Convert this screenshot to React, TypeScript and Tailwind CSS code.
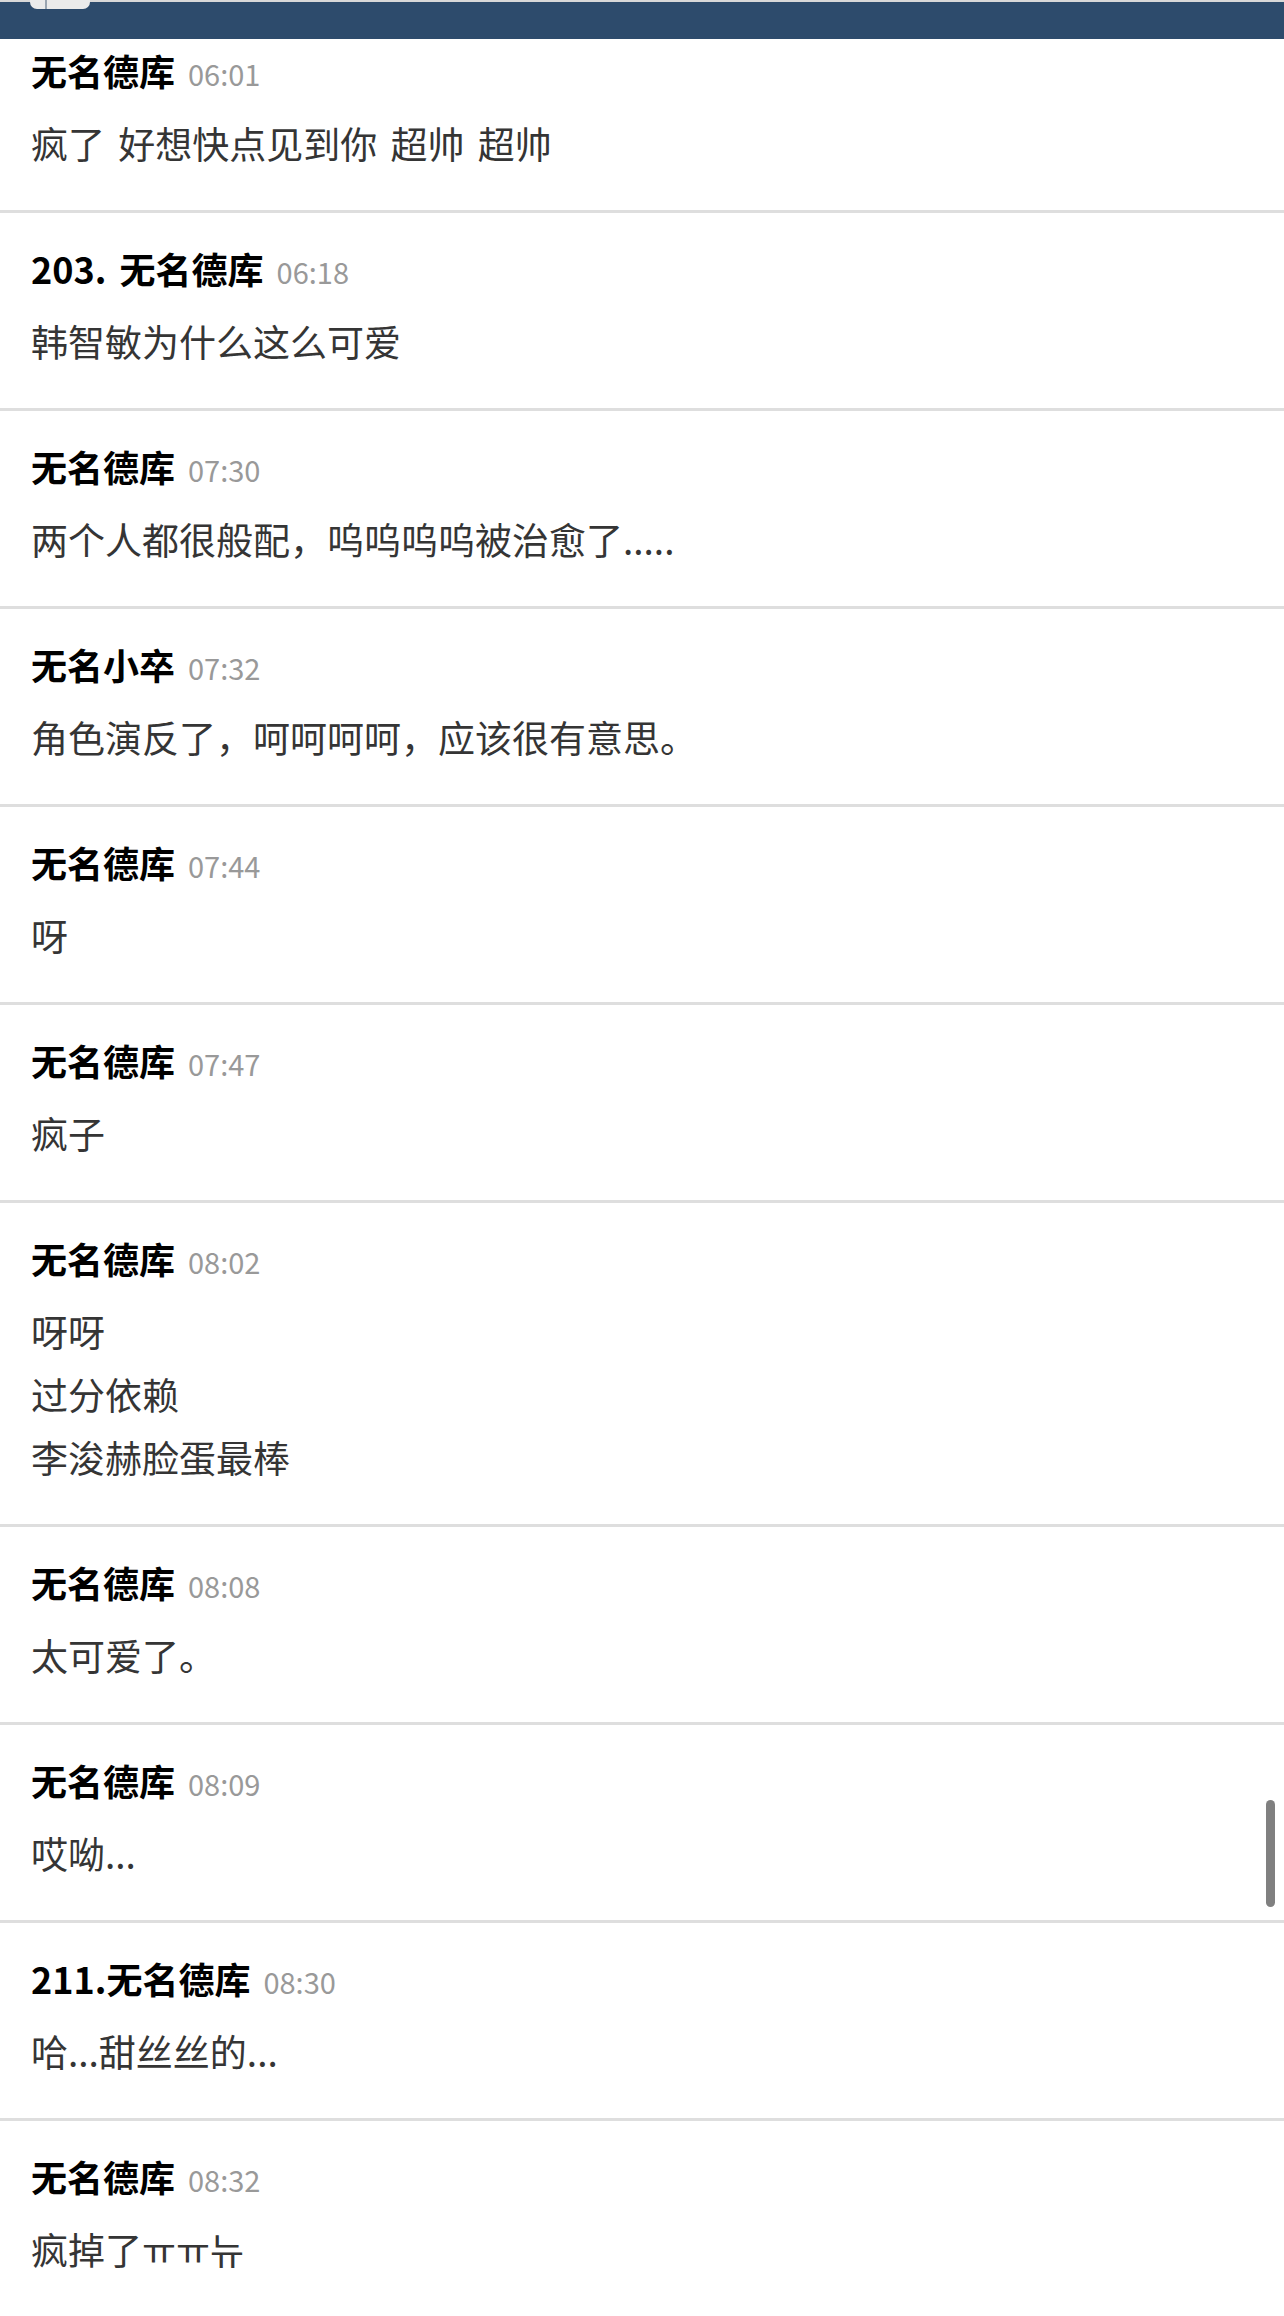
import React from "react";

type Comment = {
    name: string;
    time: string;
    lines: string[];
};

const comments: Comment[] = [
    { name: "无名德库", time: "06:01", lines: ["疯了 好想快点见到你 超帅 超帅"] },
    { name: "203. 无名德库", time: "06:18", lines: ["韩智敏为什么这么可爱"] },
    { name: "无名德库", time: "07:30", lines: ["两个人都很般配，呜呜呜呜被治愈了....."] },
    { name: "无名小卒", time: "07:32", lines: ["角色演反了，呵呵呵呵，应该很有意思。"] },
    { name: "无名德库", time: "07:44", lines: ["呀"] },
    { name: "无名德库", time: "07:47", lines: ["疯子"] },
    { name: "无名德库", time: "08:02", lines: ["呀呀", "过分依赖", "李浚赫脸蛋最棒"] },
    { name: "无名德库", time: "08:08", lines: ["太可爱了。"] },
    { name: "无名德库", time: "08:09", lines: ["哎呦..."] },
    { name: "211.无名德库", time: "08:30", lines: ["哈...甜丝丝的..."] },
    { name: "无名德库", time: "08:32", lines: ["疯掉了ㅠㅠ뉴"] },
];

function CommentRow({ c }: { c: Comment }) {
    return (
        <div className="border-b-[3px] border-[#dedede] pl-[31px] pr-8 pt-[31px] pb-[35px] [word-spacing:5px]">
            <div className="flex items-baseline h-[48px] leading-[48px]">
                <span className="text-[36px] font-bold text-black [font-variant-numeric:proportional-nums]">{c.name}</span>
                <span className="ml-[13px] text-[29px] text-[#999999] [word-spacing:0]">{c.time}</span>
            </div>
            <div className="mt-[18px] text-[37px] leading-[63px] text-[#353535]">
                {c.lines.map((line, i) => (
                    <div key={i}>{line}</div>
                ))}
            </div>
        </div>
    );
}

export default function App() {
    return (
        <div
            className="relative w-full h-[2316px] overflow-hidden bg-white"
            style={{ fontFamily: '"Noto Sans CJK SC", "Noto Sans", sans-serif' }}
        >
            {/* top bar, stays put while the list scrolls */}
            <div className="fixed top-0 left-0 right-0 z-10 h-[39px] bg-[#2d4b6c] border-t-2 border-[#d8d8d8]">
                <div className="absolute left-[30px] -top-[2px] w-[60px] h-[9px] rounded-b-[7px] bg-[#ebebeb] flex">
                    <div className="w-[17px] h-full border-r-2 border-[#9aa5b1]" />
                </div>
            </div>

            {/* comment list (scrolled) */}
            <div className="pt-[15px]">
                {comments.map((c, i) => (
                    <CommentRow key={i} c={c} />
                ))}
            </div>

            {/* scroll thumb */}
            <div className="fixed right-[9px] top-[1800px] w-[9px] h-[107px] rounded-full bg-[#808080]" />
        </div>
    );
}
